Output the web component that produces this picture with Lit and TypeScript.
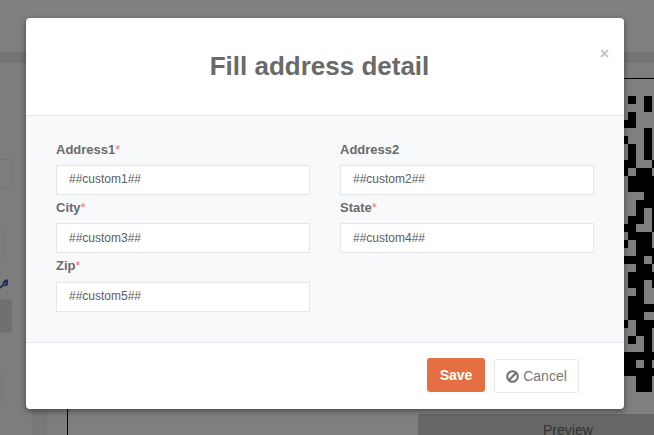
import { LitElement, css, html, svg } from 'lit'
import { customElement } from 'lit/decorators.js'

// modules of the code behind the dialog, one string per 8px row, starting at y=96
const QR_ROWS = [
  '.X.X.', '...X.', '.X...', 'XX...', '...X.', 'X..X.', '.X.X.', '.X.X.',
  'XX..X', 'X.XX.', '.XXXX', '.XXXX', '...XX', '..XXX', '..X.X', '.XX.X',
  'XX..X', '.XXX.', 'X.XX.', '..XXX', 'XXX.X', '..XX.', '.XXXX', '.XX.X',
  '..X..', '.XX..', '.XXXX', '.XX..', 'X.XXX', '..XX.', '.X.X.', '...X.',
  'XXXXX', 'XX.X.', 'XXXXX', '..XX.', '..XX.',
]

const FIELDS = [
  { label: 'Address1', required: true, value: '##custom1##' },
  { label: 'Address2', required: false, value: '##custom2##' },
  { label: 'City', required: true, value: '##custom3##' },
  { label: 'State', required: true, value: '##custom4##' },
  { label: 'Zip', required: true, value: '##custom5##' },
]

@customElement('app-root')
export class AppRoot extends LitElement {
  private renderQr() {
    return html`<svg class="qr" width="34" height="296" viewBox="0 0 34 296">
      ${QR_ROWS.map((row, y) =>
        [...row].map((cell, x) =>
          cell === 'X'
            ? svg`<rect x=${x * 8} y=${y * 8} width="8" height="8" fill="#000"></rect>`
            : null
        )
      )}
    </svg>`
  }

  render() {
    return html`
      <div class="page">
        <div class="band"></div>
        <div class="workspace">
          <div class="sidebar">
            <div class="stub stub-a"></div>
            <div class="stub stub-b"></div>
            <svg class="wrench" width="8" height="11" viewBox="0 0 8 11">
              <path d="M0 10 L4 6 M3.5 6.5 C3 4 5 2 7.5 2.5 L5.5 4.5 L6.5 5.5 L8 4 C8 6.5 6 8 4 7" fill="none" stroke="#1c3560" stroke-width="1.8"></path>
            </svg>
            <div class="stub stub-c"></div>
            <div class="stub stub-d"></div>
          </div>
          <div class="rail"></div>
          <div class="sheet">
            <div class="right">
              ${this.renderQr()}
              <div class="preview">Preview</div>
            </div>
          </div>
        </div>
      </div>

      <div class="overlay">
        <div class="modal">
          <button class="close">×</button>
          <header><h2>Fill address detail</h2></header>
          <div class="body">
            ${FIELDS.map(
              (f) => html`<div class="field">
                <label>${f.label}${f.required ? html`<span class="req">*</span>` : null}</label>
                <input type="text" .value=${f.value} />
              </div>`
            )}
          </div>
          <footer>
            <button class="btn save">Save</button>
            <button class="btn cancel">
              <svg width="13" height="13" viewBox="0 0 13 13">
                <circle cx="6.5" cy="6.5" r="5.3" fill="none" stroke="#6f6f6f" stroke-width="2"></circle>
                <path d="M2.8 10.2 L10.2 2.8" stroke="#6f6f6f" stroke-width="2"></path>
              </svg>
              Cancel
            </button>
          </footer>
        </div>
      </div>
    `
  }

  static styles = css`
    :host {
      display: block;
      position: relative;
      width: 654px;
      height: 435px;
      overflow: hidden;
      font-family: 'Liberation Sans', Arial, sans-serif;
    }

    .page {
      height: 435px;
      display: flex;
      flex-direction: column;
      background: #808080;
      overflow: hidden;
    }

    .band {
      height: 11px;
      margin-top: 52px;
      flex: none;
      background: #747474;
    }

    .workspace {
      flex: 1;
      display: flex;
      min-height: 0;
      background: #7d7d7d;
    }

    .sidebar {
      width: 32px;
      flex: none;
      display: flex;
      flex-direction: column;
      align-items: flex-start;
      padding-top: 96px;
      box-sizing: border-box;
      overflow: hidden;
    }

    .stub {
      box-sizing: border-box;
      margin-left: -6px;
      border: 1px solid #737373;
      border-radius: 3px;
      flex: none;
    }
    .stub-a { width: 18px; height: 29px; }
    .stub-b { width: 10px; height: 32px; margin-top: 40px; }
    .stub-c { width: 18px; height: 34px; margin-top: 10px; background: #707070; border-radius: 0; }
    .stub-d { width: 8px; height: 29px; margin-top: 40px; }

    .wrench {
      margin-top: 18px;
      flex: none;
    }

    .rail {
      width: 15px;
      flex: none;
      background: #787878;
    }

    .sheet {
      flex: 1;
      margin: 15px 0 0 20px;
      border-left: 1px solid #000;
      border-top: 1px solid #000;
      background: #7f7f7f;
      display: flex;
      justify-content: flex-end;
    }

    .right {
      width: 236px;
      display: flex;
      flex-direction: column;
      align-items: flex-end;
      padding-top: 17px;
      box-sizing: border-box;
    }

    .qr {
      display: block;
      flex: none;
    }

    .preview {
      align-self: stretch;
      margin-top: 22px;
      height: 34px;
      flex: none;
      padding-left: 125px;
      background: #666;
      border-radius: 3px 0 0 0;
      color: #333;
      font-size: 14px;
      line-height: 32px;
    }

    .overlay {
      position: absolute;
      inset: 0;
      display: flex;
      justify-content: flex-start;
      align-items: flex-start;
      padding: 18px 0 0 26px;
      box-sizing: border-box;
    }

    .modal {
      position: relative;
      width: 598px;
      background: #fff;
      border-radius: 4px;
      box-shadow: 0 2px 6px rgba(0, 0, 0, 0.45);
    }

    .close {
      position: absolute;
      top: 26px;
      right: 15px;
      padding: 0;
      border: 0;
      background: none;
      color: #c4c4c4;
      font: bold 16px/20px 'Liberation Sans', Arial, sans-serif;
    }

    header {
      height: 98px;
      box-sizing: border-box;
      border-bottom: 1px solid #e6e9ee;
      display: flex;
      align-items: center;
      justify-content: center;
      padding: 0 11px 2px 0;
    }

    h2 {
      margin: 0;
      font-size: 26px;
      line-height: 30px;
      font-weight: bold;
      color: #6a6a6a;
    }

    .body {
      height: 226px;
      box-sizing: border-box;
      padding: 20.67px 30px 0;
      background: #f8f9fb;
      display: grid;
      grid-template-columns: 254px 254px;
      column-gap: 30px;
      align-content: start;
    }

    .field {
      display: flex;
      flex-direction: column;
    }

    label {
      height: 18.33px;
      margin: 4px 0 6px;
      font-size: 13px;
      line-height: 18px;
      font-weight: bold;
      color: #6b6b6b;
    }

    .req {
      color: #ec7a72;
      font-weight: normal;
    }

    input {
      box-sizing: border-box;
      width: 254px;
      height: 30px;
      padding: 0 12px 1px;
      border: 1px solid #e4e7ea;
      background: #fff;
      color: #5c5c5c;
      font: 12px 'Liberation Sans', Arial, sans-serif;
      outline: none;
    }

    footer {
      height: 67px;
      box-sizing: border-box;
      border-top: 1px solid #e6e9ee;
      padding: 15px 45px 0 0;
      display: flex;
      justify-content: flex-end;
      align-items: flex-start;
      gap: 9px;
    }

    .btn {
      box-sizing: border-box;
      height: 34px;
      border-radius: 3px;
      font-family: 'Liberation Sans', Arial, sans-serif;
      font-size: 14px;
    }

    .save {
      width: 58px;
      padding: 0;
      border: 0;
      background: #e56f42;
      color: #fff;
      font-weight: bold;
    }

    .cancel {
      width: 85px;
      margin-top: 1px;
      padding: 0;
      border: 1px solid #e8e8e8;
      background: #fff;
      color: #777;
      display: flex;
      align-items: center;
      justify-content: center;
      gap: 4px;
    }
  `
}

declare global {
  interface HTMLElementTagNameMap {
    'app-root': AppRoot
  }
}
